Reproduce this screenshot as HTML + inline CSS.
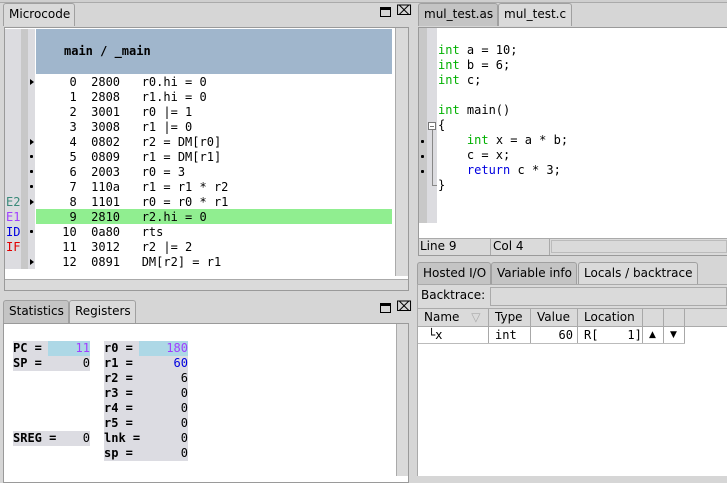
<!DOCTYPE html><html><head><style>
*{box-sizing:border-box;margin:0;padding:0}
body{width:727px;height:476px;background:#d6d6d6;position:relative;overflow:hidden;font-family:"DejaVu Sans","Liberation Sans",sans-serif;font-size:12px;color:#000}
.a{position:absolute}
.m{font-family:"DejaVu Sans Mono","Liberation Mono",monospace;font-size:12px;white-space:pre;line-height:15px}
.tab{position:absolute;border:1px solid #a0a0a0;border-bottom:none;border-radius:3px 3px 0 0;padding:3px 0 0 5px;height:23px;background:#c4c4c4}
.tab.on{background:#dadada}
.w{background:#fff}
.b{border:1px solid #9a9a9a}
.cell{position:absolute;border-right:1px solid #a8a8a8;height:100%;padding:1px 0 0 6px}
.rb{background:#dcdce2}
.tr{position:absolute;left:30px;width:0;height:0;border-left:4px solid #000;border-top:3px solid transparent;border-bottom:3px solid transparent}
.dt{position:absolute;width:3px;height:3px;background:#000;border-radius:1px}
</style></head><body>
<div class="a" style="left:0;top:0;width:727px;height:3px;background:#cfcfcf;border-bottom:1px solid #aaa"></div>

<div class="tab on" style="left:3px;top:3px;width:72px">Microcode</div>
<div class="a" style="left:380px;top:7px;width:11px;height:10px;border:1px solid #000;border-top-width:3px"></div>
<div class="a" style="left:396px;top:3px;font-size:14px;line-height:16px">⌧</div>
<div class="a w b" style="left:4px;top:27px;width:405px;height:264px"></div>
<div class="a" style="left:5px;top:29px;width:16px;height:240px;background:#dcdce0"></div>
<div class="a" style="left:21px;top:29px;width:7px;height:240px;background:#c8c8c8"></div>
<div class="a" style="left:28px;top:29px;width:7px;height:240px;background:#dcdce0"></div>
<div class="a" style="left:36px;top:29px;width:356px;height:45px;background:#a0b6cc"></div>
<div class="a m" style="left:64px;top:44px;font-weight:bold">main / _main</div>
<div class="a" style="left:36px;top:209px;width:356px;height:15px;background:#90ee90"></div>
<div class="a m" style="left:55px;top:75px">  0  2800   r0.hi = 0
  1  2808   r1.hi = 0
  2  3001   r0 |= 1
  3  3008   r1 |= 0
  4  0802   r2 = DM[r0]
  5  0809   r1 = DM[r1]
  6  2003   r0 = 3
  7  110a   r1 = r1 * r2
  8  1101   r0 = r0 * r1
  9  2810   r2.hi = 0
 10  0a80   rts
 11  3012   r2 |= 2
 12  0891   DM[r2] = r1</div>
<div class="tr" style="top:79px"></div>
<div class="tr" style="top:139px"></div>
<div class="dt" style="left:30px;top:155px"></div>
<div class="dt" style="left:30px;top:170px"></div>
<div class="dt" style="left:30px;top:185px"></div>
<div class="tr" style="top:199px"></div>
<div class="dt" style="left:30px;top:230px"></div>
<div class="tr" style="top:259px"></div>
<div class="a m" style="left:6px;top:195px"><span style="color:#3a8a7a">E2</span>
<span style="color:#a040ff">E1</span>
<span style="color:#0000e0">ID</span>
<span style="color:#e00000">IF</span></div>
<div class="a" style="left:395px;top:28px;width:13px;height:248px;background:#dadada;border-left:1px solid #aaa"></div>
<div class="a" style="left:5px;top:279px;width:403px;height:11px;background:#dadada;border-top:1px solid #aaa"></div>

<div class="tab" style="left:3px;top:300px;width:66px">Statistics</div>
<div class="tab on" style="left:69px;top:300px;width:67px">Registers</div>
<div class="a" style="left:380px;top:303px;width:11px;height:10px;border:1px solid #000;border-top-width:3px"></div>
<div class="a" style="left:396px;top:299px;font-size:14px;line-height:16px">⌧</div>
<div class="a w b" style="left:3px;top:323px;width:406px;height:160px"></div>
<div class="a" style="left:396px;top:324px;width:12px;height:152px;background:#dadada;border-left:1px solid #aaa"></div>
<div class="a rb" style="left:13px;top:341px;width:77px;height:30px"></div>
<div class="a" style="left:48px;top:341px;width:42px;height:15px;background:#add8e6"></div>
<div class="a rb" style="left:13px;top:431px;width:77px;height:15px"></div>
<div class="a rb" style="left:104px;top:341px;width:84px;height:120px"></div>
<div class="a" style="left:139px;top:341px;width:49px;height:15px;background:#add8e6"></div>
<div class="a m" style="left:13px;top:341px;font-weight:bold">PC =
SP =</div>
<div class="a m" style="left:13px;top:431px;font-weight:bold">SREG =</div>
<div class="a m" style="left:13px;top:341px;width:77px;text-align:right"><span style="color:#a040ff">11</span>
0</div>
<div class="a m" style="left:13px;top:431px;width:77px;text-align:right">0</div>
<div class="a m" style="left:104px;top:341px;font-weight:bold">r0 =
r1 =
r2 =
r3 =
r4 =
r5 =
lnk =
sp =</div>
<div class="a m" style="left:104px;top:341px;width:84px;text-align:right"><span style="color:#a040ff">180</span>
<span style="color:#0000e0">60</span>
6
0
0
0
0
0</div>

<div class="tab" style="left:418px;top:3px;width:80px">mul_test.as</div>
<div class="tab on" style="left:498px;top:3px;width:74px">mul_test.c</div>
<div class="a w b" style="left:418px;top:27px;width:312px;height:229px"></div>
<div class="a" style="left:419px;top:28px;width:8px;height:195px;background:#c8c8c8"></div>
<div class="a" style="left:427px;top:28px;width:10px;height:195px;background:#dcdce0"></div>
<div class="a m" style="left:438px;top:43px"><span style="color:#00b000">int</span> a = 10;
<span style="color:#00b000">int</span> b = 6;
<span style="color:#00b000">int</span> c;

<span style="color:#00b000">int</span> main()
{
    <span style="color:#00b000">int</span> x = a * b;
    c = x;
    <span style="color:#0000e0">return</span> c * 3;
}</div>
<div class="a" style="left:428px;top:122px;width:8px;height:8px;border:1px solid #777;background:#fff"></div>
<div class="a" style="left:430px;top:126px;width:4px;height:1px;background:#777"></div>
<div class="a" style="left:432px;top:130px;width:1px;height:55px;background:#888"></div>
<div class="a" style="left:432px;top:185px;width:5px;height:1px;background:#888"></div>
<div class="dt" style="left:421px;top:140px"></div>
<div class="dt" style="left:421px;top:155px"></div>
<div class="dt" style="left:421px;top:170px"></div>
<div class="a" style="left:419px;top:238px;width:308px;height:17px;background:#dadada;border-top:1px solid #aaa"></div>
<div class="a" style="left:419px;top:239px;width:72px;height:16px;border-right:1px solid #aaa;padding-left:1px;font-size:12px">Line 9</div>
<div class="a" style="left:492px;top:239px;width:58px;height:16px;border-right:1px solid #aaa;padding-left:1px">Col 4</div>
<div class="a" style="left:551px;top:240px;width:176px;height:13px;border:1px solid #bbb"></div>

<div class="tab" style="left:417px;top:262px;width:74px">Hosted I/O</div>
<div class="tab" style="left:491px;top:262px;width:86px">Variable info</div>
<div class="tab on" style="left:578px;top:262px;width:120px">Locals / backtrace</div>
<div class="a" style="left:417px;top:284px;width:310px;height:192px;border-left:1px solid #aaa;border-top:1px solid #aaa;background:#dadada"></div>
<div class="a" style="left:421px;top:288px">Backtrace:</div>
<div class="a" style="left:490px;top:287px;width:237px;height:19px;border:1px solid #aaa;background:#dadada"></div>
<div class="a w" style="left:418px;top:308px;width:309px;height:168px;border-top:1px solid #aaa"></div>
<div class="a" style="left:418px;top:309px;width:309px;height:18px;background:#dadada;border-bottom:1px solid #aaa">
<div class="cell" style="left:0;width:71px">Name <span style="color:#aaa;margin-left:8px">▽</span></div>
<div class="cell" style="left:71px;width:42px">Type</div>
<div class="cell" style="left:113px;width:47px">Value</div>
<div class="cell" style="left:160px;width:65px">Location</div>
<div class="cell" style="left:225px;width:21px"></div>
<div class="cell" style="left:246px;width:21px"></div>
</div>
<div class="a" style="left:418px;top:327px;width:267px;height:17px;border-bottom:1px solid #bbb">
<div class="cell" style="left:0;width:71px;padding-left:10px">└x</div>
<div class="cell m" style="left:71px;width:42px">int</div>
<div class="cell m" style="left:113px;width:47px;text-align:right;padding-right:4px">60</div>
<div class="cell m" style="left:160px;width:65px">R[    1]</div>
<div class="cell" style="left:225px;width:21px;font-size:9px;padding-top:3px">▲</div>
<div class="cell" style="left:246px;width:21px;font-size:9px;padding-top:3px">▼</div>
</div>
</body></html>
